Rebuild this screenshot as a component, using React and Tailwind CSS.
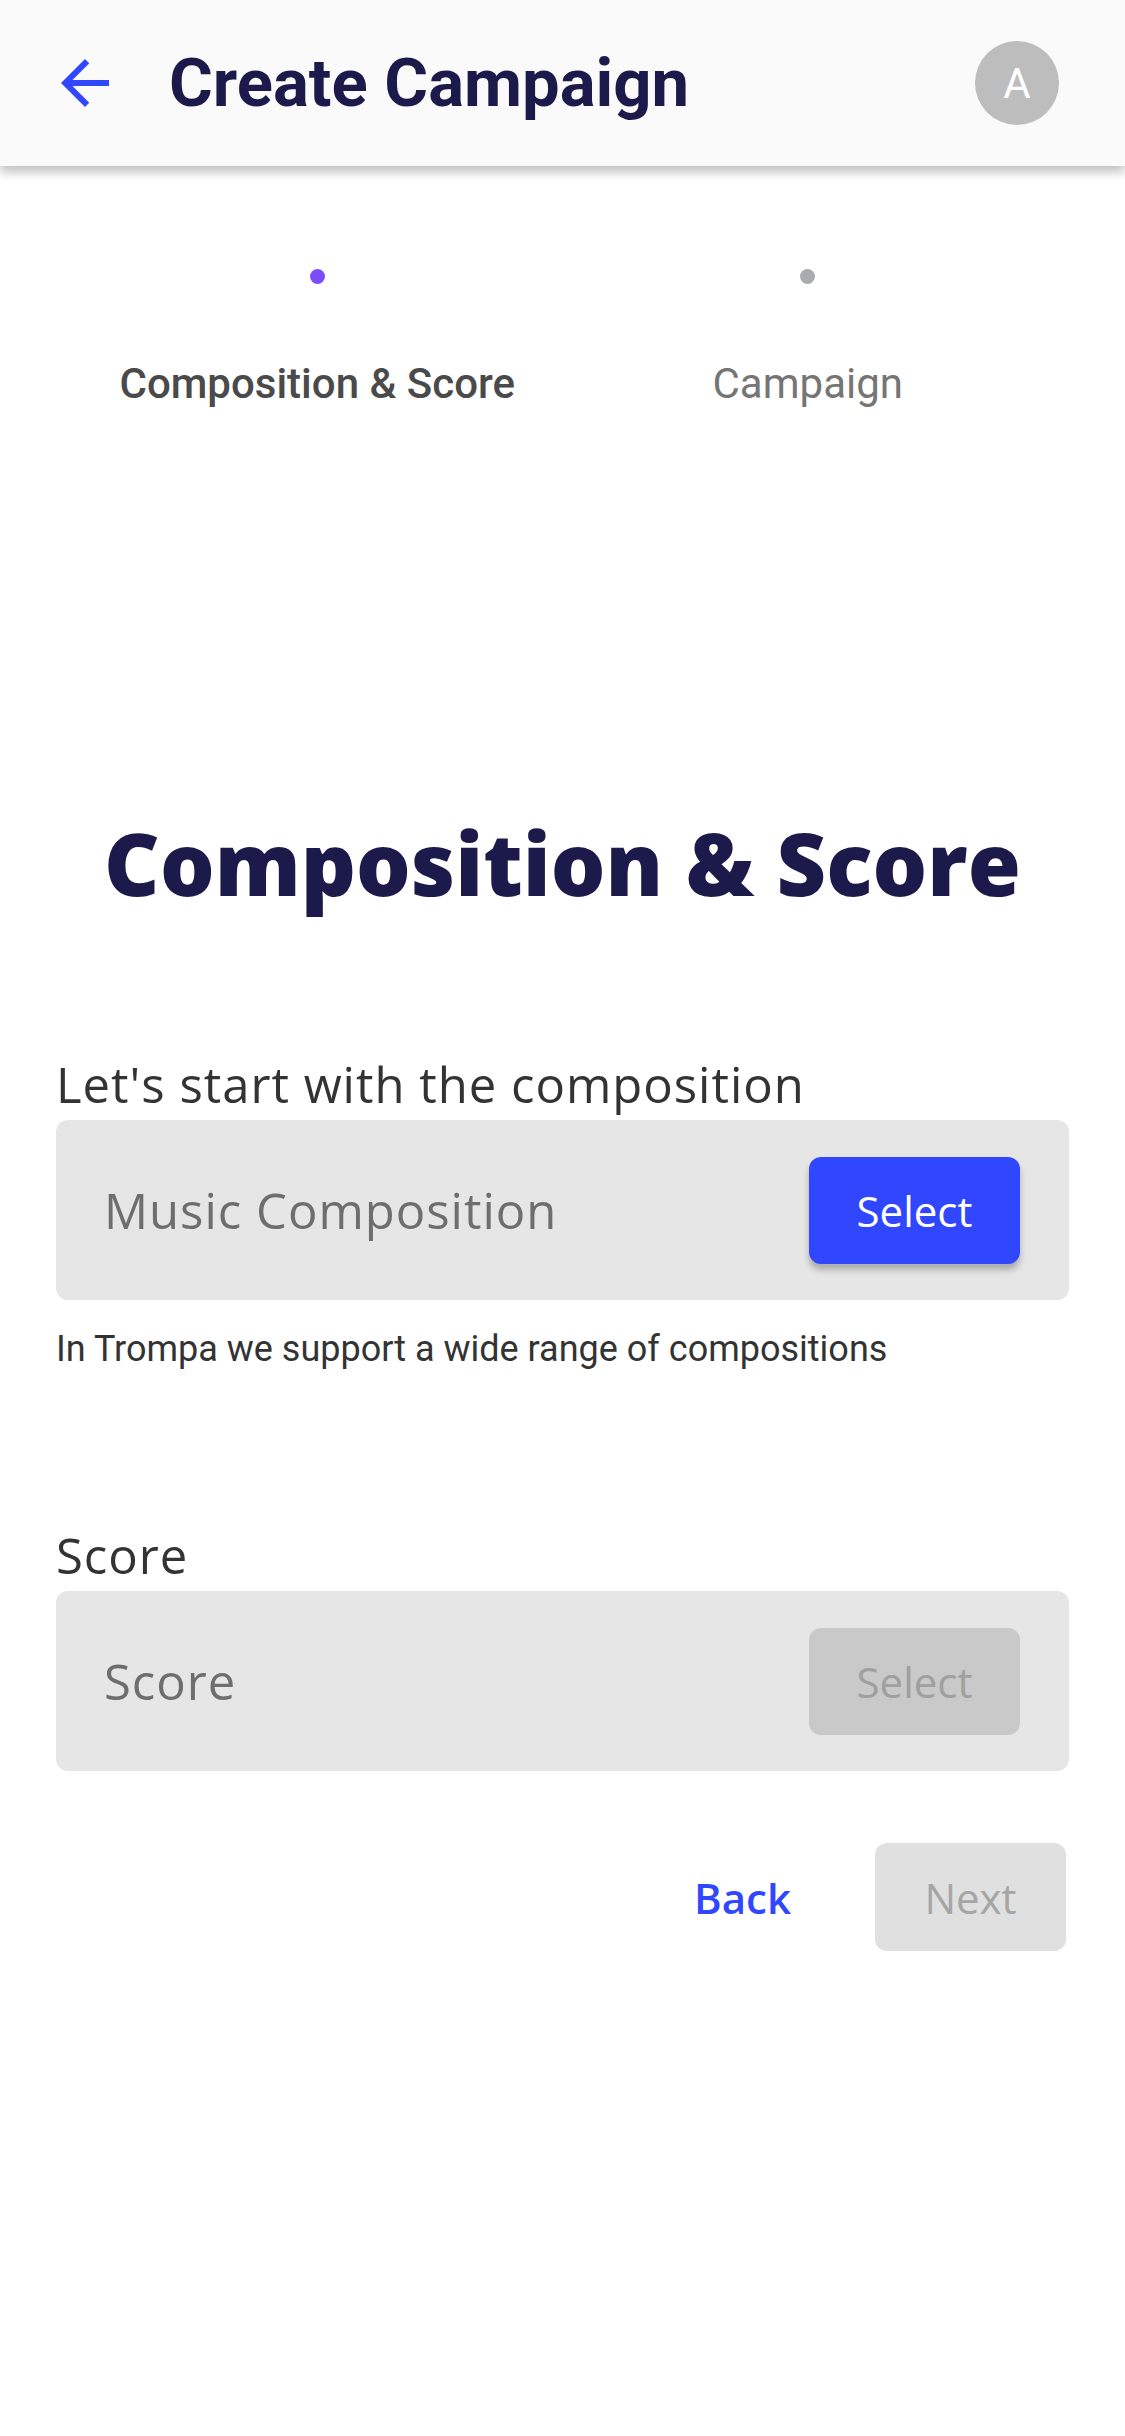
import React from "react";

const ArrowBack = () => (
  <svg viewBox="0 0 24 24" className="w-[72px] h-[72px] shrink-0" fill="#3047ff">
    <path d="M20 11H7.83l5.59-5.59L12 4l-8 8 8 8 1.41-1.41L7.83 13H20v-2z" />
  </svg>
);

const Picker = ({ placeholder, enabled }) => (
  <div className="flex items-center justify-between h-[180px] rounded-[12px] bg-[#e6e6e6] pl-[48px] pr-[49px]">
    <span className="font-['Open_Sans',sans-serif] text-[49px] leading-[64px] text-[#6e6e6e] tracking-[1px]">
      {placeholder}
    </span>
    <button
      className={
        enabled
          ? "w-[211px] h-[107px] rounded-[12px] bg-[#3047ff] text-white font-['Open_Sans',sans-serif] text-[42px] shadow-[0_6px_6px_rgba(0,0,0,0.25)]"
          : "w-[211px] h-[107px] rounded-[12px] bg-[#c9c9c9] text-[#a0a0a0] font-['Open_Sans',sans-serif] text-[42px]"
      }
    >
      Select
    </button>
  </div>
);

export default function App() {
  return (
    <div className="min-h-screen bg-white">
      {/* Header */}
      <div className="flex items-center h-[166px] bg-[#fafafa] pl-[49px] pr-[66px] shadow-[0_6px_10px_rgba(0,0,0,0.25)] relative">
        <ArrowBack />
        <h1 className="ml-[48px] flex-1 font-['Roboto',sans-serif] font-bold text-[67px] leading-[80px] text-[#1b1a4b]">
          Create Campaign
        </h1>
        <div className="w-[84px] h-[84px] rounded-full bg-[#bdbdbd] flex items-center justify-center font-['Roboto',sans-serif] text-white text-[42px]">
          A
        </div>
      </div>

      {/* Stepper */}
      <div className="grid grid-cols-2 px-[72px]">
        <div className="flex flex-col items-center">
          <div className="mt-[103px] w-[15px] h-[15px] rounded-full bg-[#7c4dff]" />
          <div className="mt-[70px] font-['Roboto',sans-serif] font-medium text-[42px] leading-[60px] text-[#4a4a4a]">
            Composition &amp; Score
          </div>
        </div>
        <div className="flex flex-col items-center">
          <div className="mt-[103px] w-[15px] h-[15px] rounded-full bg-[#a9abae]" />
          <div className="mt-[70px] font-['Roboto',sans-serif] text-[42px] leading-[60px] text-[#757575]">
            Campaign
          </div>
        </div>
      </div>

      {/* Form */}
      <div className="px-[56px]">
        <h2 className="mt-[391px] text-center font-['Open_Sans',sans-serif] font-extrabold text-[86px] leading-[116px] text-[#1b1a4b]">
          Composition &amp; Score
        </h2>

        <div className="mt-[131px] mb-[4px] font-['Open_Sans',sans-serif] text-[49px] leading-[64px] text-[#333333] tracking-[1px]">
          Let's start with the composition
        </div>
        <Picker placeholder="Music Composition" enabled />
        <div className="mt-[25px] font-['Roboto',sans-serif] text-[36px] leading-[48px] text-[#333333]">
          In Trompa we support a wide range of compositions
        </div>

        <div className="mt-[150px] mb-[4px] font-['Open_Sans',sans-serif] text-[49px] leading-[64px] text-[#333333] tracking-[1px]">
          Score
        </div>
        <Picker placeholder="Score" />

        <div className="mt-[72px] flex justify-end items-center gap-[46px] pr-[3px]">
          <button className="h-[108px] px-[38px] font-['Open_Sans',sans-serif] font-semibold text-[42px] text-[#3047ff]">
            Back
          </button>
          <button className="w-[191px] h-[108px] rounded-[12px] bg-[#e0e0e0] font-['Open_Sans',sans-serif] text-[42px] text-[#a6a6a6]">
            Next
          </button>
        </div>
      </div>
    </div>
  );
}
